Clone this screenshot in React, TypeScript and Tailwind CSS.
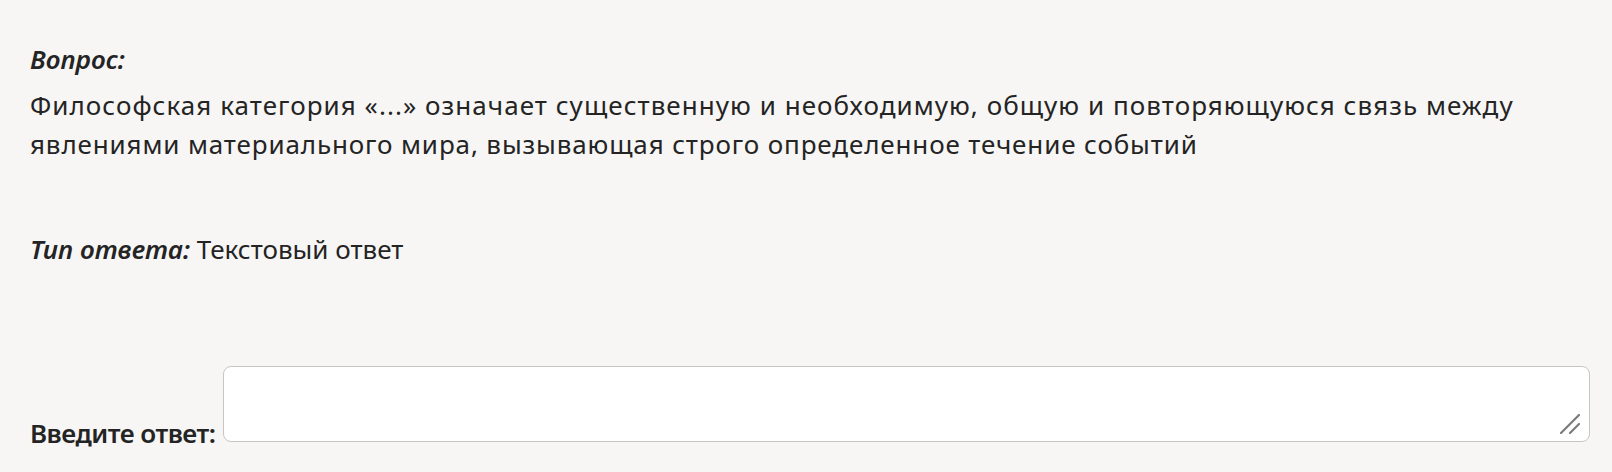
export default function App() {
  return (
    <div
      className="min-h-[472px] w-full bg-[#f7f6f5] pl-[30px] pr-[22px] pt-[40px] text-[#242424]"
      style={{ fontFamily: '"Noto Sans", "Open Sans", sans-serif' }}
    >
      {/* Question */}
      <div className="text-[26px] leading-[39px]">
        <div className="italic font-semibold">Вопрос:</div>
        <div className="mt-[7px]">
          <span className="tracking-[1.05px]">
            Философская категория «...» означает существенную и необходимую, общую и повторяющуюся связь между
          </span>
          <br />
          <span className="tracking-[0.87px]">
            явлениями материального мира, вызывающая строго определенное течение событий
          </span>
        </div>
      </div>

      {/* Answer type */}
      <div className="mt-[66px] text-[26px] leading-[39px]">
        <span className="italic font-semibold">Тип ответа:</span> Текстовый ответ
      </div>

      {/* Answer input */}
      <div className="mt-[97px] flex items-end gap-[8px]">
        <span className="text-[26px] font-semibold leading-[18px] tracking-[-0.5px] whitespace-nowrap">
          Введите ответ:
        </span>
        <div className="relative flex-1">
          <textarea className="block h-[76px] w-full resize-none rounded-[8px] border border-[#c8c6c4] bg-white px-3 py-2 text-[22px] outline-none" />
          <svg
            className="pointer-events-none absolute bottom-[8px] right-[10px]"
            width="20"
            height="20"
            viewBox="0 0 20 20"
          >
            <line x1="1" y1="19" x2="19" y2="1" stroke="#7a7a7a" strokeWidth="2.2" strokeLinecap="round" />
            <line x1="10" y1="19" x2="19" y2="10" stroke="#7a7a7a" strokeWidth="2.2" strokeLinecap="round" />
          </svg>
        </div>
      </div>
    </div>
  );
}
